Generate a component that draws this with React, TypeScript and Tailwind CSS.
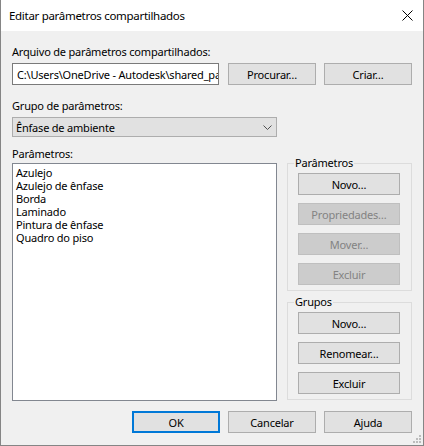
import React from "react";

const font = { fontFamily: '"Noto Sans", "Open Sans", sans-serif' };

function Btn({
  label,
  disabled,
  primary,
  className = "",
}: {
  label: string;
  disabled?: boolean;
  primary?: boolean;
  className?: string;
}) {
  const base = "flex h-[22px] items-center justify-center text-[11px] leading-none tracking-[-0.2px]";
  const look = disabled
    ? "border border-[#bfbfbf] bg-[#cccccc] text-[#838383]"
    : primary
      ? "border-2 border-[#0078d7] bg-[#e1e1e1] text-black"
      : "border border-[#adadad] bg-[#e1e1e1] text-black";
  return (
    <button type="button" disabled={disabled} className={`${base} ${look} ${className}`}>
      {label}
    </button>
  );
}

function Group({ title, children, className = "" }: { title: string; children: React.ReactNode; className?: string }) {
  return (
    <fieldset className={`border border-[#dcdcdc] px-0 pb-[5px] ${className}`}>
      <legend className="ml-[6px] px-[1px] text-[11px] leading-[14px] tracking-[-0.2px] text-black">{title}</legend>
      <div className="mt-[3px] flex flex-col gap-[8px] pl-[10px]">{children}</div>
    </fieldset>
  );
}

export default function App() {
  const items = ["Azulejo", "Azulejo de ênfase", "Borda", "Laminado", "Pintura de ênfase", "Quadro do piso"];

  return (
    <div
      style={font}
      className="relative flex h-[446px] w-[424px] flex-col border-x border-b border-[#858585] bg-[#f0f0f0] text-[11px] tracking-[-0.2px] text-black"
    >
      {/* title bar */}
      <div className="flex h-[31px] shrink-0 items-center justify-between bg-white pl-[8px] pr-[9px]">
        <span className="text-[11.5px] leading-none tracking-[-0.3px]">Editar parâmetros compartilhados</span>
        <svg width="11" height="11" viewBox="0 0 11 11" className="mr-[1px]">
          <path d="M0.5 0.5 L10.5 10.5 M10.5 0.5 L0.5 10.5" stroke="#000" strokeWidth="1" fill="none" />
        </svg>
      </div>

      <div className="flex flex-col px-[11px]">
        <div className="mt-[13px] leading-[15px]">Arquivo de parâmetros compartilhados:</div>

        <div className="mt-[4px] flex items-center">
          <div className="flex h-[22px] w-[207px] items-center overflow-hidden whitespace-nowrap border border-[#7a7a7a] bg-white pl-[4px] leading-none">
            C:\Users\OneDrive - Autodesk\shared_pa
          </div>
          <Btn label="Procurar…" className="ml-[9px] w-[88px]" />
          <Btn label="Criar…" className="ml-[8px] w-[88px]" />
        </div>

        <div className="mt-[13px] leading-[15px]">Grupo de parâmetros:</div>

        <div className="mt-[4px] flex h-[20px] w-[265px] items-center justify-between border border-[#adadad] bg-[#e1e1e1] pl-[3px] pr-[4px] leading-none">
          <span>Ênfase de ambiente</span>
          <svg width="9" height="5" viewBox="0 0 9 5">
            <path d="M0.5 0.5 L4.5 4.5 L8.5 0.5" stroke="#505050" strokeWidth="1" fill="none" />
          </svg>
        </div>

        <div className="mt-[9px] flex gap-[10px]">
          <div className="flex w-[265px] flex-col">
            <div className="leading-[15px]">Parâmetros:</div>
            <div className="mt-[2px] h-[238px] border border-[#828790] bg-white px-[3px] pt-[2px]">
              {items.map((t) => (
                <div key={t} className="leading-[13px]">
                  {t}
                </div>
              ))}
            </div>
          </div>

          <div className="flex w-[125px] flex-col pt-[10px]">
            <Group title="Parâmetros" className="h-[135px]">
              <Btn label="Novo…" className="w-[102px]" />
              <Btn label="Propriedades…" disabled className="w-[102px]" />
              <Btn label="Mover…" disabled className="w-[102px]" />
              <Btn label="Excluir" disabled className="w-[102px]" />
            </Group>
            <Group title="Grupos" className="mt-[4px] h-[105px]">
              <Btn label="Novo…" className="w-[102px]" />
              <Btn label="Renomear…" className="w-[102px]" />
              <Btn label="Excluir" className="w-[102px]" />
            </Group>
          </div>
        </div>

        <div className="mt-[10px] flex justify-end gap-[8px]">
          <Btn label="OK" primary className="w-[88px]" />
          <Btn label="Cancelar" className="w-[88px]" />
          <Btn label="Ajuda" className="w-[88px]" />
        </div>
      </div>

      <svg width="10" height="10" viewBox="0 0 10 10" className="absolute bottom-[1px] right-[1px]">
        <rect x="7" y="1" width="2" height="2" fill="#bcbcbc" />
        <rect x="4" y="4" width="2" height="2" fill="#bcbcbc" />
        <rect x="7" y="4" width="2" height="2" fill="#bcbcbc" />
        <rect x="1" y="7" width="2" height="2" fill="#bcbcbc" />
        <rect x="4" y="7" width="2" height="2" fill="#bcbcbc" />
        <rect x="7" y="7" width="2" height="2" fill="#bcbcbc" />
      </svg>
    </div>
  );
}
